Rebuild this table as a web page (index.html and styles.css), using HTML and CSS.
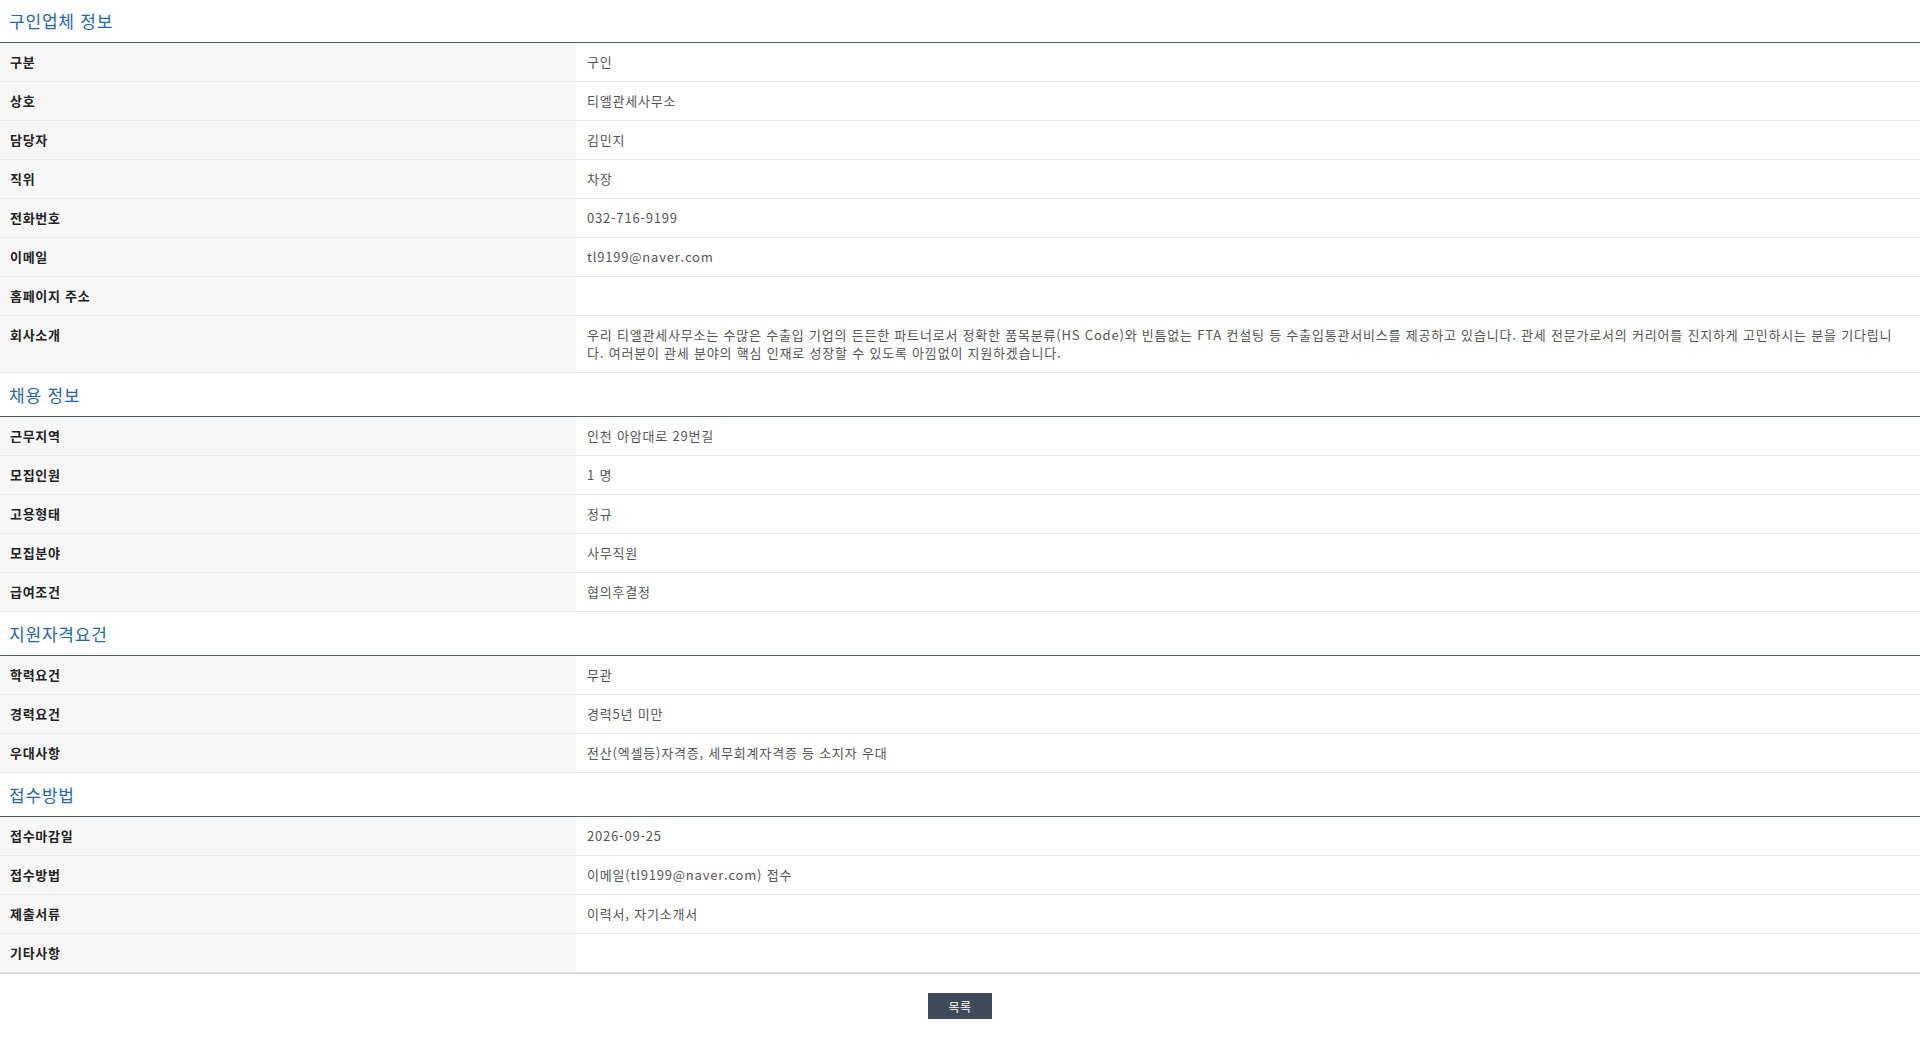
FILE: index.html
```html
<!DOCTYPE html>
<html lang="ko">
<head>
<meta charset="utf-8">
<title>채용 상세</title>
<link rel="stylesheet" href="styles.css">
</head>
<body>
<div class="page">
  <section class="sec">
    <h2 class="sec-title first">구인업체 정보</h2>
    <table class="info">
      <tr><th>구분</th><td>구인</td></tr>
      <tr><th>상호</th><td>티엘관세사무소</td></tr>
      <tr><th>담당자</th><td>김민지</td></tr>
      <tr><th>직위</th><td>차장</td></tr>
      <tr><th>전화번호</th><td>032-716-9199</td></tr>
      <tr><th>이메일</th><td>tl9199@naver.com</td></tr>
      <tr><th>홈페이지 주소</th><td></td></tr>
      <tr><th>회사소개</th><td>우리 티엘관세사무소는 수많은 수출입 기업의 든든한 파트너로서 정확한 품목분류(HS Code)와 빈틈없는 FTA 컨설팅 등 수출입통관서비스를 제공하고 있습니다. 관세 전문가로서의 커리어를 진지하게 고민하시는 분을 기다립니다. 여러분이 관세 분야의 핵심 인재로 성장할 수 있도록 아낌없이 지원하겠습니다.</td></tr>
    </table>
  </section>
  <section class="sec">
    <h2 class="sec-title">채용 정보</h2>
    <table class="info">
      <tr><th>근무지역</th><td>인천 아암대로 29번길</td></tr>
      <tr><th>모집인원</th><td>1 명</td></tr>
      <tr><th>고용형태</th><td>정규</td></tr>
      <tr><th>모집분야</th><td>사무직원</td></tr>
      <tr><th>급여조건</th><td>협의후결정</td></tr>
    </table>
  </section>
  <section class="sec">
    <h2 class="sec-title">지원자격요건</h2>
    <table class="info">
      <tr><th>학력요건</th><td>무관</td></tr>
      <tr><th>경력요건</th><td>경력5년 미만</td></tr>
      <tr><th>우대사항</th><td>전산(엑셀등)자격증, 세무회계자격증 등 소지자 우대</td></tr>
    </table>
  </section>
  <section class="sec">
    <h2 class="sec-title">접수방법</h2>
    <table class="info last">
      <tr><th>접수마감일</th><td>2026-09-25</td></tr>
      <tr><th>접수방법</th><td>이메일(tl9199@naver.com) 접수</td></tr>
      <tr><th>제출서류</th><td>이력서, 자기소개서</td></tr>
      <tr><th>기타사항</th><td></td></tr>
    </table>
  </section>
  <div class="actions">
    <a class="btn" href="#">목록</a>
  </div>
</div>
</body>
</html>
```

FILE: styles.css
```css
html, body {
  margin: 0;
  padding: 0;
  background: #fff;
}
body {
  font-family: "Noto Sans CJK KR", "Noto Sans", sans-serif;
  color: #222;
}
.page {
  width: 100%;
}
.sec-title {
  margin: 0;
  padding: 12px 9px 11px;
  font-size: 17px;
  line-height: 20px;
  font-weight: 400;
  letter-spacing: 0.8px;
  color: #2566b3;
  border-bottom: 1px solid #555a63;
}
.sec-title.first {
  padding-top: 11px;
}
.info {
  width: 100%;
  border-collapse: collapse;
  table-layout: fixed;
}
.info th,
.info td {
  box-sizing: border-box;
  padding: 10px 10px 10px 11px;
  font-size: 13px;
  line-height: 18px;
  letter-spacing: 0.8px;
  vertical-align: top;
  border-bottom: 1px solid #e8e8e8;
  text-align: left;
}
.info th {
  width: 30%;
  background: #f7f7f7;
  font-weight: 700;
  color: #222;
  padding-left: 10px;
  letter-spacing: 0.7px;
}
.info td {
  color: #555;
  padding-right: 22px;
}
.info.last tr:last-child th,
.info.last tr:last-child td {
  border-bottom: 2px solid #dadada;
}
.actions {
  display: flex;
  justify-content: center;
  padding-top: 19px;
}
.btn {
  display: inline-flex;
  align-items: center;
  justify-content: center;
  width: 64px;
  height: 26px;
  background: #3e4a5a;
  color: #fff;
  font-size: 12px;
  letter-spacing: 0.5px;
  text-decoration: none;
}
```
